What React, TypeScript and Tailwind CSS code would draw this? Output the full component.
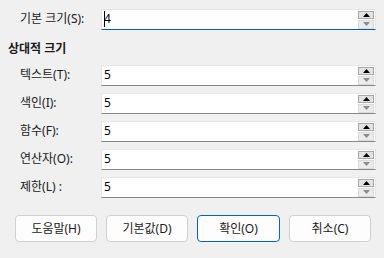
import React from 'react';

const rows = [
    { label: '텍스트(T):', value: '5' },
    { label: '색인(I):', value: '5' },
    { label: '함수(F):', value: '5' },
    { label: '연산자(O):', value: '5' },
    { label: '제한(L) :', value: '5' },
];

function Spinner() {
    return (
        <div className="flex flex-col gap-[1px] pr-[1px] pt-[1px]">
            <div className="w-[16px] h-[9px] bg-[#e3e3e3] border border-[#a8a8a8] flex items-center justify-center">
                <svg width="7" height="4" viewBox="0 0 7 4"><path d="M0 4 L3.5 0 L7 4 Z" fill="#000" /></svg>
            </div>
            <div className="w-[16px] h-[9px] bg-[#ececec] border border-[#dadada] flex items-center justify-center">
                <svg width="7" height="4" viewBox="0 0 7 4"><path d="M0 0 L3.5 4 L7 0 Z" fill="#8a8a8a" /></svg>
            </div>
        </div>
    );
}

function Field({ label, value, focused }: { label: string; value: string; focused?: boolean }) {
    return (
        <div className="flex items-center h-[20px]">
            <div className="w-[101px] shrink-0 pl-[20px] whitespace-nowrap text-[12px] text-[#1a1a1a]">{label}</div>
            <div
                className={
                    focused
                        ? 'w-[275px] h-[21px] flex bg-white border border-[#e6e6e6] border-b-[#005fb8]'
                        : 'w-[275px] h-[21px] flex bg-white border border-[#e6e6e6] border-b-[#878787]'
                }
            >
                <div className="flex-1 flex items-center pl-[2px] text-[12px] text-black">
                    {focused && <span className="inline-block w-[1px] h-[16px] bg-black mr-[-1px]" />}
                    {value}
                </div>
                <Spinner />
            </div>
        </div>
    );
}

function Btn({ children, primary }: { children: React.ReactNode; primary?: boolean }) {
    return (
        <button
            className={
                primary
                    ? 'w-[83px] h-[27px] rounded-[4px] bg-[#fdfdfd] border border-[#0067c0] text-[12px] text-[#1a1a1a]'
                    : 'w-[82px] h-[27px] rounded-[4px] bg-[#fdfdfd] border border-[#d0d0d0] text-[12px] text-[#1a1a1a]'
            }
        >
            {children}
        </button>
    );
}

export default function App() {
    return (
        <div
            className="w-[384px] h-[258px] bg-[#f0f0f0] flex flex-col pt-[9px] overflow-hidden"
            style={{ fontFamily: '"Noto Sans", "Noto Sans CJK KR", sans-serif' }}
        >
            <Field label="기본 크기(S):" value="4" focused />
            <div className="mt-[10px] h-[20px] pl-[8px] flex items-center text-[12px] font-bold text-[#1a1a1a]">상대적 크기</div>
            <div className="mt-[6px] flex flex-col gap-[8px]">
                {rows.map((r) => (
                    <Field key={r.label} label={r.label} value={r.value} />
                ))}
            </div>
            <div className="mt-[18px] pl-[15px] flex gap-[9px]">
                <Btn>도움말(H)</Btn>
                <Btn>기본값(D)</Btn>
                <Btn primary>확인(O)</Btn>
                <Btn>취소(C)</Btn>
            </div>
        </div>
    );
}
